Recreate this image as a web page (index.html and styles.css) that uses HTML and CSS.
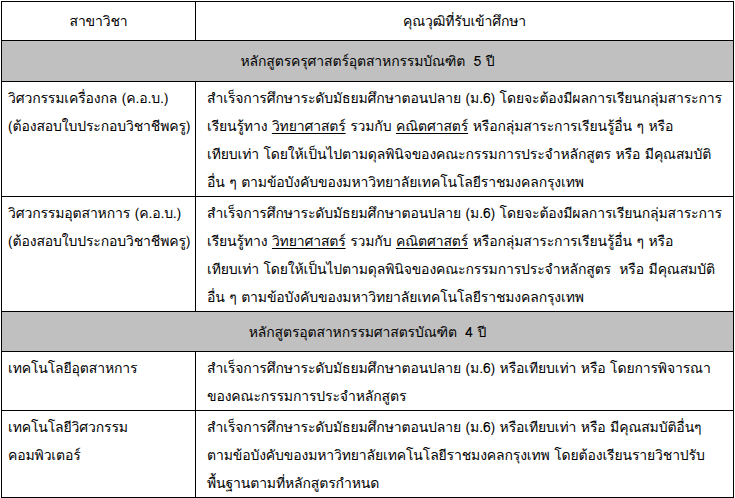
FILE: index.html
```html
<!DOCTYPE html>
<html lang="th">
<head>
<meta charset="utf-8">
<link rel="stylesheet" href="styles.css">
</head>
<body>
<table class="qual">
  <tr class="r-head">
    <td class="c-left center">สาขาวิชา</td>
    <td class="c-right center">คุณวุฒิที่รับเข้าศึกษา</td>
  </tr>
  <tr class="r-group">
    <td colspan="2" class="group">หลักสูตรครุศาสตร์อุตสาหกรรมบัณฑิต&nbsp; 5 ปี</td>
  </tr>
  <tr class="r-a">
    <td class="c-left">วิศวกรรมเครื่องกล (ค.อ.บ.)<br>(ต้องสอบใบประกอบวิชาชีพครู)</td>
    <td class="c-right">สำเร็จการศึกษาระดับมัธยมศึกษาตอนปลาย (ม.6) โดยจะต้องมีผลการเรียนกลุ่มสาระการ<br>เรียนรู้ทาง <u>วิทยาศาสตร์</u> รวมกับ <u>คณิตศาสตร์</u> หรือกลุ่มสาระการเรียนรู้อื่น ๆ หรือ<br>เทียบเท่า โดยให้เป็นไปตามดุลพินิจของคณะกรรมการประจำหลักสูตร หรือ มีคุณสมบัติ<br>อื่น ๆ ตามข้อบังคับของมหาวิทยาลัยเทคโนโลยีราชมงคลกรุงเทพ</td>
  </tr>
  <tr class="r-b">
    <td class="c-left">วิศวกรรมอุตสาหการ (ค.อ.บ.)<br>(ต้องสอบใบประกอบวิชาชีพครู)</td>
    <td class="c-right">สำเร็จการศึกษาระดับมัธยมศึกษาตอนปลาย (ม.6) โดยจะต้องมีผลการเรียนกลุ่มสาระการ<br>เรียนรู้ทาง <u>วิทยาศาสตร์</u> รวมกับ <u>คณิตศาสตร์</u> หรือกลุ่มสาระการเรียนรู้อื่น ๆ หรือ<br>เทียบเท่า โดยให้เป็นไปตามดุลพินิจของคณะกรรมการประจำหลักสูตร&nbsp; หรือ มีคุณสมบัติ<br>อื่น ๆ ตามข้อบังคับของมหาวิทยาลัยเทคโนโลยีราชมงคลกรุงเทพ</td>
  </tr>
  <tr class="r-group2">
    <td colspan="2" class="group">หลักสูตรอุตสาหกรรมศาสตรบัณฑิต&nbsp; 4 ปี</td>
  </tr>
  <tr class="r-c">
    <td class="c-left">เทคโนโลยีอุตสาหการ</td>
    <td class="c-right">สำเร็จการศึกษาระดับมัธยมศึกษาตอนปลาย (ม.6) หรือเทียบเท่า หรือ โดยการพิจารณา<br>ของคณะกรรมการประจำหลักสูตร</td>
  </tr>
  <tr class="r-d">
    <td class="c-left">เทคโนโลยีวิศวกรรม<br>คอมพิวเตอร์</td>
    <td class="c-right">สำเร็จการศึกษาระดับมัธยมศึกษาตอนปลาย (ม.6) หรือเทียบเท่า หรือ มีคุณสมบัติอื่นๆ<br>ตามข้อบังคับของมหาวิทยาลัยเทคโนโลยีราชมงคลกรุงเทพ โดยต้องเรียนรายวิชาปรับ<br>พื้นฐานตามที่หลักสูตรกำหนด</td>
  </tr>
</table>
</body>
</html>
```

FILE: styles.css
```css
html, body {
  margin: 0;
  padding: 0;
  background: #ffffff;
}
body {
  font-family: Tahoma, "Waree", "Loma", "Noto Sans Thai Looped", "Noto Sans Thai", "Noto Sans", sans-serif;
  font-size: 14px;
  letter-spacing: -0.15px;
  color: #000000;
}
.qual {
  border-collapse: collapse;
  margin: 1px 0 0 1px;
  width: 733px;
  table-layout: fixed;
}
.qual td {
  border: 1px solid #000000;
  vertical-align: top;
  line-height: 28px;
  padding: 2px 0 0 0;
  white-space: nowrap;
}
.c-left {
  width: 193px;
  padding-left: 6px !important;
}
.c-right {
  padding-left: 11px !important;
}
.center {
  text-align: center;
  vertical-align: middle !important;
  padding: 0 !important;
}
.group {
  background: #c0c0c0;
  text-align: center;
  vertical-align: middle !important;
  padding: 0 !important;
}
.r-head td { height: 38px; }
.r-group td { height: 40px; }
.r-a td { height: 112px; }
.r-b td { height: 111px; }
.r-group2 td { height: 39px; }
.r-c td { height: 53px; }
.r-d td { height: 84px; }
u {
  text-underline-offset: 2px;
}
```
